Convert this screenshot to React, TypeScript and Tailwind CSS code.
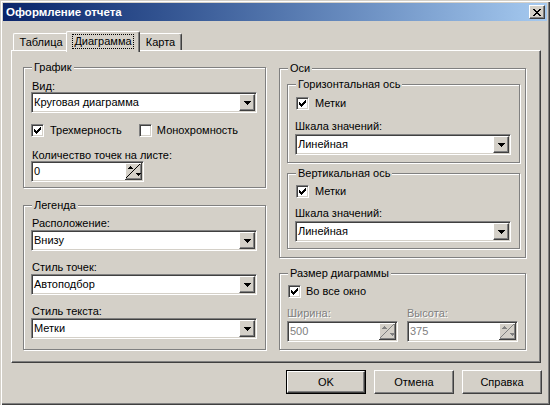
import React from "react";

const sunken =
  "border border-t-[#808080] border-l-[#808080] border-b-white border-r-white shadow-[inset_1px_1px_0_#404040,inset_-1px_-1px_0_#d4d0c8]";
const raised =
  "border border-t-white border-l-white border-b-[#404040] border-r-[#404040] shadow-[inset_-1px_-1px_0_#808080]";

const Group = ({ title, className, children }: { title: string; className: string; children?: React.ReactNode }) => (
  <div className={`relative border border-[#808080] shadow-[inset_1px_1px_0_#fff,1px_1px_0_#fff] ${className}`}>
    <span className="absolute -top-[7px] left-[8px] bg-[#d4d0c8] px-[2px] leading-[12px]">{title}</span>
    {children}
  </div>
);

const CheckMark = () => (
  <svg width="7" height="7" viewBox="0 0 7 7" shapeRendering="crispEdges">
    <path
      d="M0 2h1v3h-1z M1 3h1v3h-1z M2 4h1v3h-1z M3 3h1v3h-1z M4 2h1v3h-1z M5 1h1v3h-1z M6 0h1v3h-1z"
      fill="#000"
    />
  </svg>
);

const Checkbox = ({ checked, label, gap = "ml-[6px]" }: { checked: boolean; label: string; gap?: string }) => (
  <div className="flex items-center h-[13px]">
    <div className={`w-[13px] h-[13px] bg-white flex items-center justify-center ${sunken}`}>
      {checked && <CheckMark />}
    </div>
    <span className={`${gap} leading-[13px]`}>{label}</span>
  </div>
);

const Combo = ({ value, className }: { value: string; className: string }) => (
  <div className={`h-[21px] bg-white flex items-center ${sunken} ${className}`}>
    <span className="flex-1 pl-[2px] leading-[13px] truncate">{value}</span>
    <div className={`w-[16px] h-[17px] mr-[1px] bg-[#d4d0c8] flex items-center justify-center ${raised}`}>
      <svg width="7" height="4" viewBox="0 0 7 4" shapeRendering="crispEdges">
        <path d="M0 0h7v1h-7z M1 1h5v1h-5z M2 2h3v1h-3z M3 3h1v1h-1z" fill="#000" />
      </svg>
    </div>
  </div>
);

const SpinGlyph = ({ disabled }: { disabled?: boolean }) => {
  const c = disabled ? "#808080" : "#000";
  return (
    <svg width="17" height="17" viewBox="0 0 17 17" shapeRendering="crispEdges" className="mr-[1px]">
      <rect x="0" y="0" width="17" height="17" fill="#d4d0c8" />
      <path d="M0 0h16v1h-16z M0 0h1v16h-1z" fill="#fff" />
      <path d="M0 16h17v1h-17z M16 0h1v17h-1z" fill="#404040" />
      <path d="M1 15h15v1h-15z M15 1h1v15h-1z" fill="#808080" />
      <path d="M1 15L15 1" stroke={c} strokeWidth="1" shapeRendering="auto" />
      <path d="M5 3l3 3h-6z" fill={c} />
      <path d="M10 10h6l-3 3z" fill={c} />
    </svg>
  );
};

const Spin = ({ value, className, disabled }: { value: string; className: string; disabled?: boolean }) => (
  <div className={`h-[21px] bg-white flex items-center ${sunken} ${className}`}>
    <span className={`flex-1 pl-[2px] leading-[13px] ${disabled ? "text-[#808080]" : ""}`}>{value}</span>
    <SpinGlyph disabled={disabled} />
  </div>
);

const Label = ({ children, className = "", disabled }: { children: React.ReactNode; className?: string; disabled?: boolean }) => (
  <div
    className={`leading-[12px] h-[12px] ${disabled ? "text-[#808080] [text-shadow:1px_1px_0_#fff]" : ""} ${className}`}
  >
    {children}
  </div>
);

const Button = ({ children, isDefault }: { children: React.ReactNode; isDefault?: boolean }) =>
  isDefault ? (
    <div className="w-[80px] h-[24px] border border-black">
      <div className={`w-full h-full flex items-center justify-center bg-[#d4d0c8] ${raised}`}>{children}</div>
    </div>
  ) : (
    <div className={`w-[80px] h-[24px] flex items-center justify-center bg-[#d4d0c8] ${raised}`}>{children}</div>
  );

export default function App() {
  return (
    <div className="w-[550px] h-[405px] bg-[#d4d0c8] p-[3px] flex flex-col text-black text-[11px] font-['Liberation_Sans',Arial,sans-serif] shadow-[inset_1px_1px_0_#d4d0c8,inset_2px_2px_0_#fff,inset_-1px_-1px_0_#404040,inset_-2px_-2px_0_#808080] overflow-hidden">
      {/* Title bar */}
      <div className="h-[18px] flex items-center justify-between bg-gradient-to-r from-[#0a246a] to-[#a6caf0] pl-[3px] pr-[2px]">
        <span className="text-white font-bold text-[11.5px] leading-[13px]">Оформление отчета</span>
        <div className={`w-[16px] h-[14px] bg-[#d4d0c8] flex items-center justify-center ${raised}`}>
          <svg width="8" height="7" viewBox="0 0 8 7" shapeRendering="crispEdges">
            <path
              d="M0 0h2v1h-2z M6 0h2v1h-2z M1 1h2v1h-2z M5 1h2v1h-2z M2 2h4v1h-4z M3 3h2v1h-2z M2 4h4v1h-4z M1 5h2v1h-2z M5 5h2v1h-2z M0 6h2v1h-2z M6 6h2v1h-2z"
              fill="#000"
            />
          </svg>
        </div>
      </div>

      {/* Tabs */}
      <div className="mt-[10px] ml-[10px] flex items-end h-[19px]">
        <div className="w-[55px] h-[17px] border-l border-t border-white rounded-tl-[2px] flex items-center justify-center leading-[13px]">
          Таблица
        </div>
        <div className="relative z-10 -mx-[2px] w-[74px] h-[21px] -mb-[2px] bg-[#d4d0c8] border-l border-t border-white border-r border-r-[#404040] rounded-t-[2px] shadow-[inset_-1px_0_0_#808080] flex items-start justify-center pt-[2px]">
          <span className="border border-dotted border-black px-[1px] leading-[13px]">Диаграмма</span>
        </div>
        <div className="w-[44px] h-[17px] border-t border-white border-r border-r-[#404040] rounded-tr-[2px] shadow-[inset_-1px_0_0_#808080] flex items-center justify-center pl-[2px] leading-[13px]">
          Карта
        </div>
      </div>

      {/* Panel */}
      <div className="ml-[8px] w-[530px] h-[313px] border border-t-white border-l-white border-b-[#404040] border-r-[#404040] shadow-[inset_-1px_-1px_0_#808080] flex pl-[11px] pt-[16px]">
        {/* Left column */}
        <div className="flex flex-col w-[243px]">
          <Group title="График" className="h-[121px] pl-[7px]">
            <Label className="mt-[12px] ml-[1px]">Вид:</Label>
            <Combo value="Круговая диаграмма" className="w-[226px]" />
            <div className="mt-[11px] flex">
              <Checkbox checked label="Трехмерность" />
              <div className="ml-[17px]">
                <Checkbox checked={false} label="Монохромность" gap="ml-[5px]" />
              </div>
            </div>
            <Label className="mt-[12px] ml-[1px]">Количество точек на листе:</Label>
            <Spin value="0" className="w-[113px]" />
          </Group>

          <Group title="Легенда" className="mt-[17px] h-[145px] pl-[7px]">
            <Label className="mt-[11px] ml-[1px]">Расположение:</Label>
            <Combo value="Внизу" className="mt-[1px] w-[226px]" />
            <Label className="mt-[10px] ml-[1px]">Стиль точек:</Label>
            <Combo value="Автоподбор" className="mt-[1px] w-[226px]" />
            <Label className="mt-[10px] ml-[1px]">Стиль текста:</Label>
            <Combo value="Метки" className="mt-[1px] w-[226px]" />
          </Group>
        </div>

        {/* Right column */}
        <div className="flex flex-col w-[247px] ml-[13px] mt-[1px]">
          <Group title="Оси" className="h-[190px] pl-[7px]">
            <Group title="Горизонтальная ось" className="mt-[15px] w-[233px] h-[79px] pl-[7px]">
              <div className="mt-[12px] ml-[1px]">
                <Checkbox checked label="Метки" />
              </div>
              <Label className="mt-[10px]">Шкала значений:</Label>
              <Combo value="Линейная" className="mt-[2px] w-[216px]" />
            </Group>
            <Group title="Вертикальная ось" className="mt-[10px] w-[233px] h-[76px] pl-[7px]">
              <div className="mt-[11px] ml-[1px]">
                <Checkbox checked label="Метки" />
              </div>
              <Label className="mt-[9px]">Шкала значений:</Label>
              <Combo value="Линейная" className="mt-[2px] w-[216px]" />
            </Group>
          </Group>

          <Group title="Размер диаграммы" className="mt-[15px] h-[77px] pl-[7px]">
            <div className="mt-[11px] ml-[1px]">
              <Checkbox checked label="Во все окно" gap="ml-[5px]" />
            </div>
            <div className="mt-[9px] flex">
              <Label disabled className="w-[120px]">Ширина:</Label>
              <Label disabled>Высота:</Label>
            </div>
            <div className="mt-[2px] flex gap-[9px]">
              <Spin value="500" disabled className="w-[111px]" />
              <Spin value="375" disabled className="w-[111px]" />
            </div>
          </Group>
        </div>
      </div>

      {/* Buttons */}
      <div className="mt-[7px] flex justify-end gap-[8px] pr-[5px]">
        <Button isDefault>OK</Button>
        <Button>Отмена</Button>
        <Button>Справка</Button>
      </div>
    </div>
  );
}
